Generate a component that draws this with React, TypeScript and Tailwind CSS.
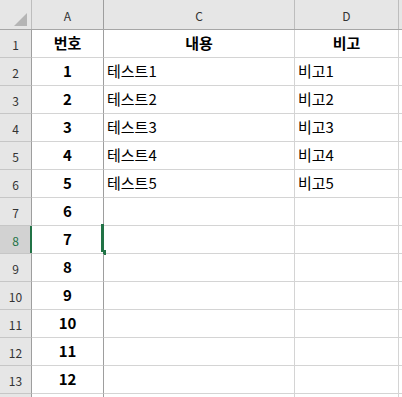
import React from 'react'

const font = { fontFamily: '"Malgun Gothic", "Noto Sans CJK KR", "Noto Sans", sans-serif' }

const rows: { a: string; c: string; d: string }[] = [
  { a: '번호', c: '내용', d: '비고' },
  { a: '1', c: '테스트1', d: '비고1' },
  { a: '2', c: '테스트2', d: '비고2' },
  { a: '3', c: '테스트3', d: '비고3' },
  { a: '4', c: '테스트4', d: '비고4' },
  { a: '5', c: '테스트5', d: '비고5' },
  { a: '6', c: '', d: '' },
  { a: '7', c: '', d: '' },
  { a: '8', c: '', d: '' },
  { a: '9', c: '', d: '' },
  { a: '10', c: '', d: '' },
  { a: '11', c: '', d: '' },
  { a: '12', c: '', d: '' },
  { a: '', c: '', d: '' },
]

export default function App() {
  return (
    <div className="w-[402px] h-[397px] overflow-hidden bg-white text-black" style={font}>
      {/* column headers */}
      <div className="flex h-[30px] bg-[#e6e6e6] border-b border-[#a6a6a6] text-[12px] text-[#333]">
        <div className="w-[32px] shrink-0 border-r border-[#bdbdbd] flex items-end justify-end pr-[4px] pb-[3px]">
          <svg width="13" height="13" viewBox="0 0 13 13">
            <polygon points="13,0 13,13 0,13" fill="#b5b5b5" />
          </svg>
        </div>
        <div className="w-[72px] shrink-0 border-r border-[#9e9e9e] flex items-center justify-center pt-[2px]">A</div>
        <div className="w-[191px] shrink-0 border-r border-[#bdbdbd] flex items-center justify-center pt-[2px]">C</div>
        <div className="w-[104px] shrink-0 border-r border-[#bdbdbd] flex items-center justify-center pt-[2px]">D</div>
        <div className="flex-1" />
      </div>

      {rows.map((r, i) => {
        const n = i + 1
        const header = n === 1
        const sel = n === 8
        return (
          <div key={i} className="flex h-[28px]">
            <div
              className={`w-[32px] shrink-0 border-b border-[#c6c6c6] border-r border-r-[#9e9e9e] flex items-end justify-center pb-[3px] text-[12px] relative ${
                sel ? 'bg-[#d2d2d2] text-[#217346]' : 'bg-[#e6e6e6] text-[#333]'
              }`}
            >
              {n < 14 && <span>{n}</span>}
              {sel && <div className="absolute right-[-1px] top-0 bottom-0 w-[2px] bg-[#217346]" />}
            </div>
            <div className="w-[72px] shrink-0 border-b border-b-[#d4d4d4] border-r border-r-[#9e9e9e] flex items-center justify-center font-bold text-[15px] relative">
              {r.a}
              {sel && (
                <>
                  <div className="absolute right-[-1px] top-[-2px] bottom-[1px] w-[3px] bg-[#217346]" />
                  <div className="absolute right-[-3px] bottom-[-2px] w-[3px] h-[5px] bg-[#217346]" />
                </>
              )}
            </div>
            <div
              className={`w-[191px] shrink-0 border-b border-r border-[#d4d4d4] flex items-center text-[15px] ${
                header ? 'justify-center font-bold' : 'pl-[3px]'
              }`}
            >
              {r.c}
            </div>
            <div
              className={`w-[104px] shrink-0 border-b border-r border-[#d4d4d4] flex items-center text-[15px] ${
                header ? 'justify-center font-bold' : 'pl-[3px]'
              }`}
            >
              {r.d}
            </div>
            <div className="flex-1 border-b border-[#d4d4d4]" />
          </div>
        )
      })}
    </div>
  )
}
